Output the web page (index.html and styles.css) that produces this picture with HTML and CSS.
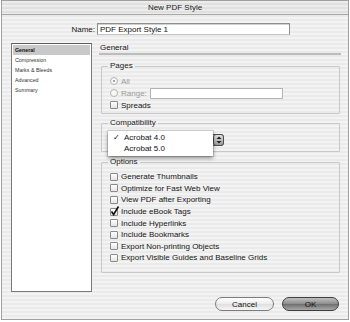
FILE: index.html
```html
<!DOCTYPE html>
<html lang="en">
<head>
  <meta charset="UTF-8">
  <title>New PDF Style</title>
  <link rel="stylesheet" href="styles.css">
</head>
<body>
  <div class="window">
    <div class="titlebar">New PDF Style</div>

    <div class="name-row">
      <label class="name-label" for="style-name">Name:</label>
      <input class="name-input" id="style-name" type="text" value="PDF Export Style 1">
    </div>

    <div class="main">
      <ul class="sidebar">
        <li class="is-selected">General</li>
        <li>Compression</li>
        <li>Marks &amp; Bleeds</li>
        <li>Advanced</li>
        <li>Summary</li>
      </ul>

      <div class="panel">
        <h2 class="panel-title">General</h2>

        <fieldset class="group group-pages">
          <legend>Pages</legend>
          <div class="row is-disabled"><span class="radio is-on"></span>All</div>
          <div class="row is-disabled"><span class="radio"></span>Range: <span class="range-field"></span></div>
          <div class="row"><span class="check"></span>Spreads</div>
        </fieldset>

        <fieldset class="group group-compat">
          <legend>Compatibility</legend>
          <div class="select">
            <span class="stepper">
              <svg width="6" height="8" viewBox="0 0 6 8"><path d="M3 0.5 L5.5 3 L0.5 3 Z M3 7.5 L5.5 5 L0.5 5 Z" fill="#222"/></svg>
            </span>
            <ul class="menu">
              <li><span class="tick">&#10003;</span>Acrobat 4.0</li>
              <li><span class="tick"></span>Acrobat 5.0</li>
            </ul>
          </div>
        </fieldset>

        <fieldset class="group group-options">
          <legend>Options</legend>
          <div class="row"><span class="check"></span>Generate Thumbnails</div>
          <div class="row"><span class="check"></span>Optimize for Fast Web View</div>
          <div class="row"><span class="check"></span>View PDF after Exporting</div>
          <div class="row"><span class="check is-on">
            <svg width="10" height="11" viewBox="0 0 10 11"><path d="M1.5 6.5 L3.6 9.5 L8.5 1.5" fill="none" stroke="#111" stroke-width="1.6"/></svg>
          </span>Include eBook Tags</div>
          <div class="row"><span class="check"></span>Include Hyperlinks</div>
          <div class="row"><span class="check"></span>Include Bookmarks</div>
          <div class="row"><span class="check"></span>Export Non-printing Objects</div>
          <div class="row"><span class="check"></span>Export Visible Guides and Baseline Grids</div>
        </fieldset>
      </div>
    </div>

    <div class="buttons">
      <button class="btn btn-cancel">Cancel</button>
      <button class="btn btn-ok">OK</button>
    </div>
  </div>
</body>
</html>
```

FILE: styles.css
```css
body {
  margin: 0;
  font-family: "Liberation Sans", Arial, sans-serif;
  font-size: 8px;
  color: #161616;
  background: #fff;
}

.window {
  box-sizing: border-box;
  width: 348px;
  height: 320px;
  margin: 0 1px;
  border: 1px solid #a0a0a0;
  background-color: #efefef;
  background-image: repeating-linear-gradient(to bottom, #f3f3f3 0, #f3f3f3 2px, #eaeaea 2px, #eaeaea 4px);
}

.titlebar {
  height: 13px;
  line-height: 13px;
  text-align: center;
  color: #222;
  border-bottom: 1px solid #a8a8a8;
  background-image: repeating-linear-gradient(to bottom, #ececec 0, #ececec 2px, #e0e0e0 2px, #e0e0e0 4px);
}

/* name field */
.name-row {
  display: flex;
  align-items: center;
  margin-top: 8px;
  height: 12px;
}
.name-label {
  width: 93px;
  text-align: right;
  margin-right: 2px;
}
.name-input {
  box-sizing: border-box;
  width: 193px;
  height: 12px;
  margin: 0;
  padding: 0 2px;
  border: 1px solid #8e8e8e;
  border-bottom-color: #c4c4c4;
  box-shadow: inset 0 1px 0 #d0d0d0;
  font: inherit;
  color: #111;
  background: #fff;
  outline: none;
}

.main {
  display: flex;
  margin-top: 8px;
}

/* left list */
.sidebar {
  box-sizing: border-box;
  width: 81px;
  height: 249px;
  margin: 0 0 0 9px;
  padding: 1px;
  list-style: none;
  border: 1px solid #7a7a7a;
  border-top-color: #5e5e5e;
  background: #fff;
  font-size: 5.3px;
}
.sidebar li {
  height: 10px;
  line-height: 10px;
  padding-left: 2px;
  color: #333;
}
.sidebar .is-selected {
  background: #c9c9c9;
  color: #111;
  font-weight: bold;
}

/* right panel */
.panel {
  width: 242px;
  margin-left: 7px;
}
.panel-title {
  margin: 0;
  height: 10px;
  line-height: 10px;
  padding-left: 1px;
  font-size: 8px;
  font-weight: normal;
  border-bottom: 2px solid #bcbcbc;
}

.group {
  margin: 6px 1px 0 2px;
  padding: 0 6px;
  border: 1px solid #c8c8c8;
  border-radius: 1px;
  min-width: 0;
}
.group legend {
  padding: 0 2px;
  height: 10px;
  line-height: 10px;
  color: #222;
}
.group-pages {
  padding-top: 4px;
  padding-bottom: 2px;
}
.group-compat {
  margin-top: 4px;
  padding-top: 6px;
  padding-bottom: 5px;
}
.group-options {
  margin-top: 5px;
  padding-top: 4px;
  padding-bottom: 8px;
}

.row {
  display: flex;
  align-items: center;
  height: 12px;
  padding-left: 2px;
}
.group-options .row {
  height: 11.6px;
}
.row.is-disabled {
  color: #9a9a9a;
}

.radio {
  box-sizing: border-box;
  width: 8px;
  height: 8px;
  margin-right: 3px;
  border: 1px solid #b4b4b4;
  border-radius: 50%;
  background: #f8f8f8;
  display: flex;
  align-items: center;
  justify-content: center;
}
.radio.is-on::after {
  content: "";
  width: 2px;
  height: 2px;
  border-radius: 50%;
  background: #8a8a8a;
}

.check {
  position: relative;
  box-sizing: border-box;
  width: 8px;
  height: 8px;
  margin-right: 3px;
  border: 1px solid #8a8a8a;
  border-radius: 1px;
  background: linear-gradient(#ffffff, #e4e4e4);
  flex: none;
}
.check svg {
  position: absolute;
  left: -1px;
  top: -4px;
}

.range-field {
  box-sizing: border-box;
  width: 133px;
  height: 11px;
  margin-left: 3px;
  border: 1px solid #b4b4b4;
  background: #fff;
}

/* compatibility popup */
.select {
  position: relative;
  box-sizing: border-box;
  width: 116px;
  height: 12px;
  border: 1px solid #5e5e5e;
  border-radius: 3px;
  background: linear-gradient(#f4f4f4, #d2d2d2);
}
.stepper {
  position: absolute;
  right: -1px;
  top: -1px;
  box-sizing: border-box;
  width: 11px;
  height: 12px;
  border: 1px solid #4e4e4e;
  border-radius: 3px;
  background: linear-gradient(#e0e0e0, #9a9a9a);
  display: flex;
  align-items: center;
  justify-content: center;
}
.menu {
  position: absolute;
  left: -1px;
  top: -4px;
  width: 105px;
  margin: 0;
  padding: 1px 0 2px;
  list-style: none;
  background: #fff;
  box-shadow: 0 2px 4px rgba(0, 0, 0, 0.45), 0 0 0 1px rgba(0, 0, 0, 0.12);
}
.menu li {
  display: flex;
  height: 11px;
  line-height: 11px;
  color: #111;
}
.tick {
  width: 11px;
  padding-left: 5px;
  font-size: 8px;
}

/* buttons */
.buttons {
  display: flex;
  justify-content: flex-end;
  margin-top: 5px;
  padding-right: 9px;
}
.btn {
  box-sizing: border-box;
  height: 14px;
  margin: 0 0 0 8px;
  padding: 0;
  border-radius: 7px;
  font: inherit;
  color: #111;
}
.btn-cancel {
  width: 59px;
  border: 1px solid #7c7c7c;
  background: linear-gradient(#ffffff, #ececec 50%, #dedede 51%, #f6f6f6);
}
.btn-ok {
  width: 57px;
  border: 1px solid #3e3e3e;
  background: linear-gradient(#c0c0c0, #8c8c8c 50%, #6e6e6e 51%, #a8a8a8);
}
```
